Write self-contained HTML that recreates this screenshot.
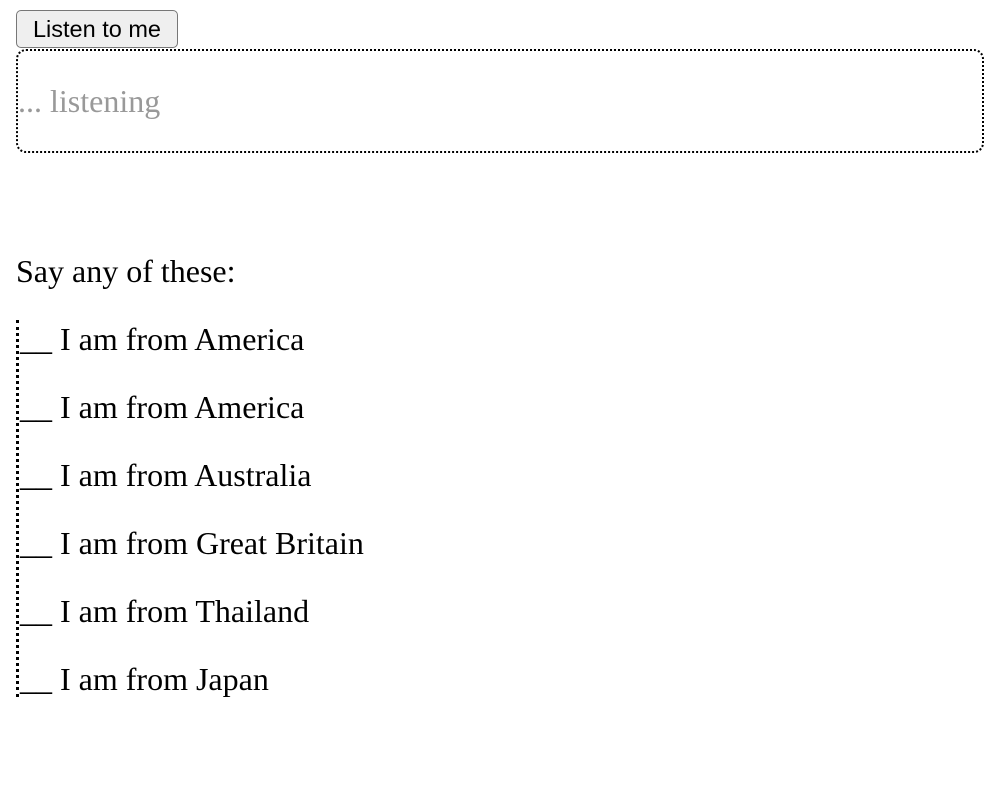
<!DOCTYPE html>
<html><head><meta charset="utf-8"><style>
body{margin:0;background:#fff;font-family:"Liberation Serif",serif;}
button{position:absolute;left:16px;top:10px;width:162px;height:38px;font-family:"Liberation Sans",sans-serif;font-size:23.5px;color:#000;background:#efefef;border:1.5px solid #777;border-radius:5px;padding:0;}
.box{position:absolute;left:16px;top:49px;width:964px;height:100px;border:2px dotted #000;border-radius:10px;}
.ph{position:absolute;left:18px;top:83px;font-size:32px;color:#999;line-height:36px;}
.say{position:absolute;left:16px;top:253px;font-size:32px;line-height:36px;}
.list{position:absolute;left:16px;top:320px;height:377px;width:400px;border-left:3px dotted #000;}
.list div{position:absolute;left:1px;font-size:32px;line-height:36px;white-space:pre;}
</style></head><body>
<button>Listen to me</button>
<div class="box"></div>
<div class="ph">... listening</div>
<div class="say">Say any of these:</div>
<div class="list">
<div style="top:1px">__ I am from America</div>
<div style="top:69px">__ I am from America</div>
<div style="top:137px">__ I am from Australia</div>
<div style="top:205px">__ I am from Great Britain</div>
<div style="top:273px">__ I am from Thailand</div>
<div style="top:341px">__ I am from Japan</div>
</div>
</body></html>
